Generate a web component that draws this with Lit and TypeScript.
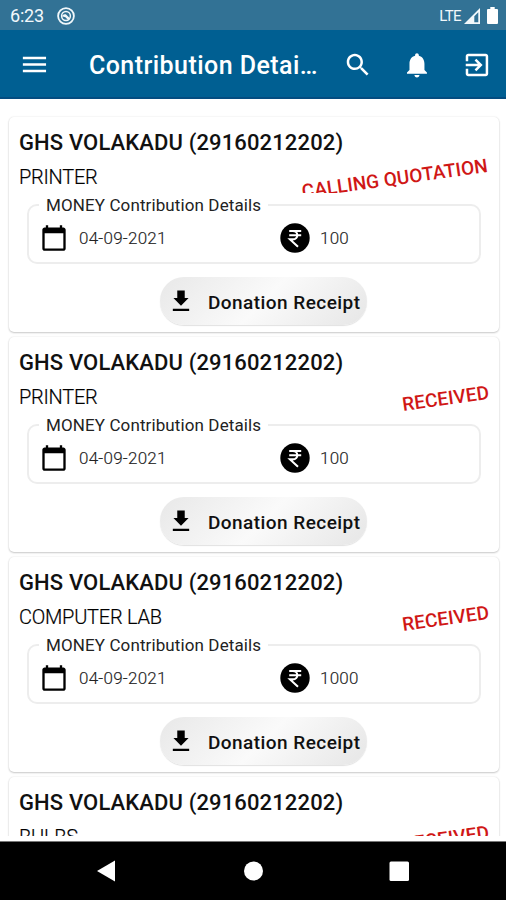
import { LitElement, html, css, svg } from "lit";
import { customElement, property } from "lit/decorators.js";

const FONT = css`Roboto, "Noto Sans", sans-serif`;

const icon = (cls: string, d: string) =>
  html`<svg class=${cls} viewBox="0 0 24 24" aria-hidden="true">${svg`<path fill="currentColor" d=${d}></path>`}</svg>`;

const MENU = "M3 18h18v-2H3v2zm0-5h18v-2H3v2zm0-7v2h18V6H3z";
const SEARCH =
  "M15.5 14h-.79l-.28-.27C15.41 12.59 16 11.11 16 9.5 16 5.91 13.09 3 9.5 3S3 5.91 3 9.5 5.91 16 9.5 16c1.61 0 3.09-.59 4.23-1.57l.27.28v.79l5 4.99L20.49 19l-4.99-5zm-6 0C7.01 14 5 11.99 5 9.5S7.01 5 9.5 5 14 7.01 14 9.5 11.99 14 9.5 14z";
const BELL =
  "M12 22c1.1 0 2-.9 2-2h-4c0 1.1.89 2 2 2zm6-6v-5c0-3.07-1.64-5.64-4.5-6.32V4c0-.83-.67-1.5-1.5-1.5s-1.5.67-1.5 1.5v.68C7.63 5.36 6 7.92 6 11v5l-2 2v1h16v-1l-2-2z";
const EXIT =
  "M10.09 15.59L11.5 17l5-5-5-5-1.41 1.41L12.67 11H3v2h9.67l-2.58 2.59zM19 3H5c-1.11 0-2 .9-2 2v4h2V5h14v14H5v-4H3v4c0 1.1.89 2 2 2h14c1.1 0 2-.9 2-2V5c0-1.1-.9-2-2-2z";
const CALENDAR =
  "M20 3h-1V1h-2v2H7V1H5v2H4c-1.1 0-2 .9-2 2v16c0 1.1.9 2 2 2h16c1.1 0 2-.9 2-2V5c0-1.1-.9-2-2-2zm0 18H4V8h16v13z";
const DOWNLOAD = "M18.5 9.4h-3.3V3H8.8v6.4H5.5l6.5 6.6 6.5-6.6zM5 18.6v1.9h14v-1.9H5z";

interface Contribution {
  school: string;
  item: string;
  status: string;
  date: string;
  amount: string;
}

const SCHOOL = "GHS VOLAKADU (29160212202)";
const CONTRIBUTIONS: Contribution[] = [
  { school: SCHOOL, item: "PRINTER", status: "CALLING QUOTATION", date: "04-09-2021", amount: "100" },
  { school: SCHOOL, item: "PRINTER", status: "RECEIVED", date: "04-09-2021", amount: "100" },
  { school: SCHOOL, item: "COMPUTER LAB", status: "RECEIVED", date: "04-09-2021", amount: "1000" },
  { school: SCHOOL, item: "BULBS", status: "RECEIVED", date: "04-09-2021", amount: "100" },
];

@customElement("contribution-card")
export class ContributionCard extends LitElement {
  @property({ attribute: false }) entry!: Contribution;

  static styles = css`
    :host {
      display: block;
      box-sizing: border-box;
      height: 215px;
      flex: none;
      padding: 0 10px;
      border-radius: 5px;
      background: #fff;
      box-shadow: 0 1px 2px rgba(0, 0, 0, 0.2), 0 0 2px rgba(0, 0, 0, 0.1);
      font-family: ${FONT};
      color: #111;
      overflow: hidden;
    }
    .school {
      margin: 0;
      padding-top: 12px;
      font-size: 22px;
      line-height: 28px;
      font-weight: 500;
      letter-spacing: 0.13px;
      white-space: nowrap;
    }
    .row {
      display: flex;
      justify-content: space-between;
      height: 36px;
    }
    .item {
      font-size: 20px;
      line-height: 24px;
      padding-top: 8px;
      font-weight: 300;
      letter-spacing: -0.25px;
      color: #000;
      -webkit-text-stroke: 0.2px #000;
    }
    .clip {
      overflow: hidden;
      height: 36px;
      padding-left: 10px;
    }
    .status {
      display: block;
      margin-top: 10.5px;
      font-size: 19px;
      line-height: 22px;
      font-weight: 500;
      letter-spacing: 0.1px;
      color: #d01716;
      white-space: nowrap;
      transform: rotate(-8deg);
    }
    .details {
      box-sizing: border-box;
      margin: 2px 8px 0 8px;
      padding: 0;
      height: 69px;
      min-width: 0;
      border: 2px solid #ededed;
      border-radius: 10px;
    }
    legend {
      margin-left: 10px;
      padding: 0 7px;
      font-size: 17px;
      line-height: 20px;
      letter-spacing: 0.11px;
      color: #222;
    }
    .fields {
      display: grid;
      grid-template-columns: 240px 1fr;
      align-items: center;
      height: 28px;
      margin-top: 8px;
      padding-left: 11px;
    }
    .field {
      display: flex;
      align-items: center;
      font-size: 17px;
      line-height: 20px;
      font-weight: 300;
      letter-spacing: 0.25px;
      color: #222;
      -webkit-text-stroke: 0.15px #222;
    }
    .calendar {
      width: 28px;
      height: 28px;
      margin-right: 11px;
      color: #000;
    }
    .rupee {
      width: 30px;
      height: 30px;
      margin-right: 10px;
    }
    .receipt {
      display: flex;
      align-items: center;
      box-sizing: border-box;
      width: 207px;
      height: 48px;
      margin: 13px 0 0 141px;
      padding: 3px 0 0 7px;
      border: 0;
      border-radius: 24px;
      background: linear-gradient(135deg, #e8e8e8, #fafafa 50%, #e6e6e6);
      box-shadow: 0 1px 1px rgba(0, 0, 0, 0.12);
      font: 500 19px/24px ${FONT};
      letter-spacing: 0.45px;
      color: #111;
      white-space: nowrap;
    }
    .download {
      flex: none;
      width: 28px;
      height: 28px;
      margin: -3px 13px 0 0;
      color: #000;
    }
  `;

  render() {
    const e = this.entry;
    return html`
      <h2 class="school">${e.school}</h2>
      <div class="row">
        <span class="item">${e.item}</span>
        <div class="clip"><span class="status">${e.status}</span></div>
      </div>
      <fieldset class="details">
        <legend>MONEY Contribution Details</legend>
        <div class="fields">
          <div class="field">${icon("calendar", CALENDAR)}<span class="date">${e.date}</span></div>
          <div class="field">
            <svg class="rupee" viewBox="0 0 30 30" aria-hidden="true">
              <circle cx="15" cy="15" r="14.7" fill="#000"></circle>
              <path d="M9.2 8h12M9.2 12.2h12M9.2 8h3.6c6 0 6 8.4 0 8.4H10l8 7.4" fill="none" stroke="#fff" stroke-width="2.1"></path>
            </svg>
            <span class="amount">${e.amount}</span>
          </div>
        </div>
      </fieldset>
      <button class="receipt">${icon("download", DOWNLOAD)}<span class="rlabel">Donation Receipt</span></button>
    `;
  }
}

@customElement("app-root")
export class AppRoot extends LitElement {
  static styles = css`
    :host {
      display: flex;
      flex-direction: column;
      height: 900px;
      overflow: hidden;
      background: #fff;
      font-family: ${FONT};
    }
    .statusbar {
      display: flex;
      align-items: center;
      box-sizing: border-box;
      height: 30px;
      flex: none;
      padding: 1px 8px 0 10px;
      background: #327295;
      color: #f2f8fb;
    }
    .clock {
      font-size: 18px;
      line-height: 20px;
      letter-spacing: -0.2px;
    }
    .badge {
      width: 18px;
      height: 18px;
      margin-left: 13px;
    }
    .lte {
      margin-left: auto;
      font-size: 15px;
      line-height: 18px;
      letter-spacing: -0.6px;
    }
    .signal {
      width: 16px;
      height: 16px;
      margin-left: 3px;
    }
    .battery {
      width: 11px;
      height: 17px;
      margin-left: 7px;
    }
    .appbar {
      display: flex;
      align-items: center;
      box-sizing: border-box;
      height: 69px;
      flex: none;
      padding: 2px 14px 0 19px;
      background: #005f92;
      border-bottom: 2px solid #044c80;
      color: #fff;
    }
    .menu {
      width: 31px;
      height: 31px;
    }
    .title {
      margin: 3px 0 0 39px;
      width: 240px;
      font-size: 25px;
      line-height: 32px;
      font-weight: 500;
      letter-spacing: 0.45px;
      white-space: nowrap;
    }
    .action {
      width: 30px;
      height: 30px;
    }
    .gap {
      margin-left: 30px;
    }
    .search {
      margin: 0 -1px 0 15px;
    }
    .list {
      display: flex;
      flex-direction: column;
      gap: 5px;
      box-sizing: border-box;
      height: 737px;
      flex: none;
      padding: 18px 7px 0 9px;
      overflow: hidden;
    }
    .navbar {
      display: flex;
      justify-content: space-between;
      align-items: center;
      box-sizing: border-box;
      height: 59px;
      margin-top: auto;
      padding: 0 96px;
      background: #000;
      border-top: 1px solid #777;
    }
    .nav {
      width: 22px;
      height: 22px;
    }
  `;

  render() {
    return html`
      <div class="statusbar">
        <span class="clock">6:23</span>
        <svg class="badge" viewBox="0 0 18 18" aria-hidden="true">
          <circle cx="9" cy="9" r="7.9" fill="none" stroke="currentColor" stroke-width="1.8"></circle>
          <circle cx="9" cy="9" r="4.4" fill="none" stroke="currentColor" stroke-width="1.5"></circle>
          <path d="M5 9.3Q6 6.6 8.8 7.3L13.2 11.6 11.4 13.3 8.4 10.2Z" fill="currentColor"></path>
        </svg>
        <span class="lte">LTE</span>
        <svg class="signal" viewBox="0 0 16 16" aria-hidden="true">
          <path d="M0 16 16 0V16ZM10.3 14.3H14.3V4.2L10.3 8.2Z" fill="currentColor" fill-rule="evenodd"></path>
        </svg>
        <svg class="battery" viewBox="0 0 11 17" aria-hidden="true">
          <path d="M3.3 0H7.7V2H10Q11 2 11 3V16Q11 17 10 17H1Q0 17 0 16V3Q0 2 1 2H3.3Z" fill="#fff"></path>
        </svg>
      </div>
      <header class="appbar">
        ${icon("menu", MENU)}
        <h1 class="title">Contribution Detai…</h1>
        ${icon("action search", SEARCH)} ${icon("action gap", BELL)} ${icon("action gap", EXIT)}
      </header>
      <main class="list">
        ${CONTRIBUTIONS.map((c) => html`<contribution-card .entry=${c}></contribution-card>`)}
      </main>
      <nav class="navbar">
        <svg class="nav" viewBox="0 0 22 22" aria-hidden="true"><path d="M19 0.5V21.5L1 11Z" fill="#fff"></path></svg>
        <svg class="nav" viewBox="0 0 22 22" aria-hidden="true"><circle cx="11.5" cy="11" r="9.5" fill="#fff"></circle></svg>
        <svg class="nav" viewBox="0 0 22 22" aria-hidden="true"><rect x="1.5" y="1.5" width="19.5" height="19.5" rx="1.5" fill="#fff"></rect></svg>
      </nav>
    `;
  }
}
